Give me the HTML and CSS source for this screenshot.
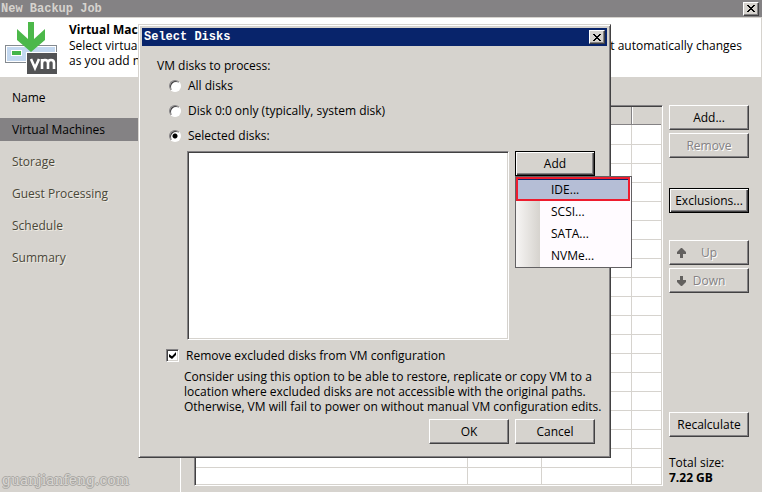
FILE: index.html
```html
<!DOCTYPE html>
<html lang="en">
<head>
<meta charset="utf-8">
<title>New Backup Job</title>
<link rel="stylesheet" href="styles.css">
</head>
<body>
<header class="titlebar main-title">
  <h1>New Backup Job</h1>
  <button class="close" type="button" aria-label="Close wizard"><svg viewBox="0 0 8 7"><path d="M0 0h2v1h1v1h2V1h1V0h2v1H7v1H6v1H5v1h1v1h1v1h1v1H6V6H5V5H3v1H2v1H0V6h1V5h1V4h1V3H2V2H1V1H0z"/></svg></button>
</header>
<section class="banner">
  <svg class="logo" viewBox="0 0 52 52">
    <rect x="0" y="23" width="52" height="18" fill="#848a90"/>
    <rect x="1" y="24" width="50" height="16" fill="#fff"/>
    <rect x="2" y="25" width="48" height="14" fill="#c3d8f0"/>
    <rect x="6" y="28" width="11" height="6" fill="#fff"/>
    <rect x="7" y="29" width="9" height="4" fill="#44b549"/>
    <path d="M23 0h6v17l11-10v11L26 30 12 18V7l11 10z" fill="#4cb84a"/>
    <rect x="21" y="30" width="31" height="22" fill="#fff"/>
    <rect x="22" y="31" width="30" height="21" fill="#525355"/>
    <path d="M26 37l4 9 4-9M37 47V37M37 41c0-4 6-4 6 0v6M43 41c0-4 6-4 6 0v6" fill="none" stroke="#fff" stroke-width="2.6"/>
  </svg>
  <div class="banner-text">
    <h2>Virtual Machi</h2>
    <p><span>Select virtual</span><span>at automatically changes</span></p>
    <p>as you add ne</p>
  </div>
</section>
<main class="wizard">
  <nav class="steps">
    <a href="#name">Name</a>
    <a href="#vms" class="current" aria-current="step">Virtual Machines</a>
    <a href="#storage" class="later">Storage</a>
    <a href="#guest" class="later">Guest Processing</a>
    <a href="#schedule" class="later">Schedule</a>
    <a href="#summary" class="later">Summary</a>
    <span class="watermark">guanjianfeng.com</span>
  </nav>
  <div class="content">
    <div class="grid sunken">
      <table aria-label="Virtual machines">
        <colgroup><col><col class="c2"><col class="c3"><col class="c4"></colgroup>
        <thead><tr><th></th><th></th><th></th><th></th></tr></thead>
        <tbody>
          <tr class="first"><td></td><td></td><td></td><td></td></tr>
          <tr><td></td><td></td><td></td><td></td></tr>
          <tr><td></td><td></td><td></td><td></td></tr>
          <tr><td></td><td></td><td></td><td></td></tr>
          <tr><td></td><td></td><td></td><td></td></tr>
          <tr><td></td><td></td><td></td><td></td></tr>
          <tr><td></td><td></td><td></td><td></td></tr>
          <tr><td></td><td></td><td></td><td></td></tr>
          <tr><td></td><td></td><td></td><td></td></tr>
          <tr><td></td><td></td><td></td><td></td></tr>
          <tr><td></td><td></td><td></td><td></td></tr>
          <tr><td></td><td></td><td></td><td></td></tr>
          <tr><td></td><td></td><td></td><td></td></tr>
          <tr><td></td><td></td><td></td><td></td></tr>
          <tr><td></td><td></td><td></td><td></td></tr>
          <tr><td></td><td></td><td></td><td></td></tr>
          <tr><td></td><td></td><td></td><td></td></tr>
          <tr><td></td><td></td><td></td><td></td></tr>
          <tr class="last"><td></td><td></td><td></td><td></td></tr>
        </tbody>
      </table>
    </div>
    <aside class="actions">
      <div class="group">
        <button class="btn" type="button">Add...</button>
        <button class="btn" type="button" disabled>Remove</button>
      </div>
      <button class="btn focused exclusions" type="button">Exclusions...</button>
      <div class="group">
        <button class="btn move" type="button" disabled><svg viewBox="0 0 9 10"><path d="M4 0h1l4 4v2H6v4H3V6H0V4z"/></svg><span>Up</span></button>
        <button class="btn move" type="button" disabled><svg viewBox="0 0 9 10"><path d="M3 0h3v4h3v2l-4 4H4L0 6V4h3z"/></svg><span>Down</span></button>
      </div>
      <button class="btn recalc" type="button">Recalculate</button>
      <p class="total">Total size:<br><strong>7.22 GB</strong></p>
    </aside>
  </div>
</main>

<div class="dialog" role="dialog" aria-labelledby="dialog-title">
  <header class="titlebar dialog-bar">
    <h2 id="dialog-title">Select Disks</h2>
    <button class="close" type="button" aria-label="Close dialog"><svg viewBox="0 0 8 7"><path d="M0 0h2v1h1v1h2V1h1V0h2v1H7v1H6v1H5v1h1v1h1v1h1v1H6V6H5V5H3v1H2v1H0V6h1V5h1V4h1V3H2V2H1V1H0z"/></svg></button>
  </header>
  <form class="dialog-body">
    <fieldset>
      <legend>VM disks to process:</legend>
      <label class="radio"><input type="radio" name="disks">All disks</label>
      <label class="radio"><input type="radio" name="disks">Disk 0:0 only (typically, system disk)</label>
      <label class="radio"><input type="radio" name="disks" checked>Selected disks:</label>
    </fieldset>
    <div class="picker">
      <select class="sunken" size="8" aria-label="Selected disks"></select>
      <div class="add">
        <button class="btn focused" type="button" aria-haspopup="menu">Add</button>
        <div class="menu" role="menu">
          <button class="active" type="button" role="menuitem">IDE...</button>
          <button type="button" role="menuitem">SCSI...</button>
          <button type="button" role="menuitem">SATA...</button>
          <button type="button" role="menuitem">NVMe...</button>
        </div>
      </div>
    </div>
    <label class="check"><input type="checkbox" checked>Remove excluded disks from VM configuration</label>
    <p class="hint">Consider using this option to be able to restore, replicate or copy VM to a<br>location where excluded disks are not accessible with the original paths.<br>Otherwise, VM will fail to power on without manual VM configuration edits.</p>
    <div class="buttons">
      <button class="btn" type="button">OK</button>
      <button class="btn" type="button">Cancel</button>
    </div>
  </form>
</div>
</body>
</html>
```
FILE: styles.css
```css
:root {
  --face: #d6d3ce;
  --shade: #848284;
  --dark: #424142;
}
* { box-sizing: border-box; }
body {
  margin: 0;
  min-height: 100vh;
  display: flex;
  flex-direction: column;
  position: relative;
  background: var(--face);
  color: #000;
  font: 12px/15px "Open Sans", "Noto Sans", sans-serif;
}
h1, h2, p { margin: 0; }
button, select { font: inherit; color: inherit; }

.titlebar {
  display: flex;
  align-items: center;
  justify-content: space-between;
}
.titlebar h1, .titlebar h2 {
  font: bold 12px/16px "Liberation Mono", monospace;
}
.main-title {
  height: 17px;
  padding: 0 3px 0 1px;
  background: var(--shade);
}
.main-title h1 { color: var(--face); }
.dialog-bar {
  height: 18px;
  padding: 0 2px;
  background: #08246b;
}
.dialog-bar h2 { color: #fff; }
.close {
  width: 16px;
  height: 14px;
  padding: 0;
  display: flex;
  align-items: center;
  justify-content: center;
  background: var(--face);
  border: 1px solid;
  border-color: #fff var(--dark) var(--dark) #fff;
  box-shadow: inset -1px -1px var(--shade);
}
.close svg { width: 8px; height: 7px; shape-rendering: crispEdges; }

.banner {
  display: flex;
  height: 59px;
  margin: 1px 1px 0 0;
  padding: 4px 19px 0 5px;
  background: #fff;
}
.logo { width: 52px; height: 52px; flex: none; }
.banner-text { flex: 1; margin-left: 12px; }
.banner-text h2 { font-size: 12px; line-height: 15px; }
.banner-text p { display: flex; justify-content: space-between; }
.banner-text h2 + p { margin-top: 1px; }

.wizard { flex: 1; display: flex; }
.steps {
  width: 181px;
  padding-top: 9px;
  display: flex;
  flex-direction: column;
  gap: 9px;
  border-right: 1px solid #fff;
}
.steps a {
  padding: 0 12px;
  line-height: 23px;
  color: #000;
  text-decoration: none;
}
.steps .current { background: var(--shade); }
.steps .later { color: #4a4739; text-shadow: 1px 1px #eeebe2; }
.watermark {
  margin: auto 0 3px 2px;
  font: 14px/18px "DejaVu Serif", serif;
  color: #d8d6d2;
  text-shadow: 1px 0 #aaa8a4, -1px 0 #aaa8a4, 0 1px #aaa8a4, 0 -1px #aaa8a4;
}

.content {
  flex: 1;
  display: flex;
  gap: 6px;
  padding: 28px 13px 6px;
}
.sunken {
  background: #fff;
  border: 1px solid;
  border-color: var(--shade) #fff #fff var(--shade);
  box-shadow: inset 1px 1px var(--dark), inset -1px -1px var(--face);
}
.grid { flex: 1; padding: 1px; }
.grid table {
  width: 100%;
  table-layout: fixed;
  border-collapse: separate;
  border-spacing: 0;
}
.c2 { width: 74px; }
.c3 { width: 90px; }
.c4 { width: 29px; }
.grid th, .grid td { padding: 0; }
.grid th {
  height: 18px;
  background: var(--face);
  border: solid var(--shade);
  border-width: 0 1px 1px 0;
  box-shadow: inset 1px 0 #fff;
}
.grid td {
  height: 19px;
  border: solid var(--face);
  border-width: 0 1px 1px 0;
}
.grid th:last-child, .grid td:last-child { border-right: 0; }
.grid .first td { height: 20px; }
.grid .last td { height: 16px; border-bottom: 0; }

.actions { width: 80px; display: flex; flex-direction: column; }
.group { display: grid; gap: 3px; }
.btn {
  width: 80px;
  height: 25px;
  padding: 0;
  background: var(--face);
  border: 1px solid;
  border-color: #fff var(--dark) var(--dark) #fff;
  box-shadow: inset -1px -1px var(--shade);
}
.btn:disabled { color: var(--shade); text-shadow: 1px 1px #fff; }
.focused {
  border-color: #000;
  box-shadow: inset 1px 1px #fff, inset -1px -1px var(--dark), inset -2px -2px var(--shade);
}
.exclusions { margin: 30px 0 27px; }
.move { display: flex; align-items: center; padding: 0 16px 0 7px; }
.move svg { width: 9px; height: 10px; flex: none; fill: #63615f; }
.move span { flex: 1; }
.recalc { margin-top: auto; }
.total { margin: 18px 0 1px; }

.dialog {
  position: absolute;
  left: 138px;
  top: 24px;
  width: 473px;
  padding: 3px;
  background: var(--face);
  border: 1px solid;
  border-color: var(--face) var(--dark) var(--dark) var(--face);
  box-shadow: inset 1px 1px #fff, inset -1px -1px var(--shade);
}
.dialog-body { padding: 12px 12px 10px 15px; }
fieldset { margin: 0; padding: 0; border: 0; }
legend { padding: 0; height: 15px; }
.radio { display: flex; align-items: center; gap: 7px; height: 25px; padding-left: 12px; }
input { appearance: none; margin: 0; background: #fff; }
.radio input {
  width: 12px;
  height: 12px;
  border: 1px solid;
  border-color: var(--shade) #fff #fff var(--shade);
  border-radius: 50%;
  box-shadow: inset 1px 1px var(--dark);
}
.radio input:checked { background: radial-gradient(circle, #000 2px, #fff 3px); }
.picker { display: flex; gap: 6px; margin: 3px 0 8px 30px; }
.picker select { width: 322px; height: 189px; padding: 0; border-radius: 0; }
.add { position: relative; }
.menu {
  position: absolute;
  left: 0;
  top: 25px;
  width: 117px;
  padding: 0 1px 0 0;
  display: grid;
  border: 1px solid #636163;
  background: linear-gradient(90deg, #f7f5f4, #d6d3ce) 0 0 / 24px 100% no-repeat, #fffbff;
}
.menu button {
  height: 22px;
  padding: 0 0 2px 35px;
  border: 0;
  background: none;
  text-align: left;
}
.menu .active {
  height: 24px;
  padding: 0 0 0 33px;
  background: #b5bed6;
  border: 2px solid #ee1c2e;
  box-shadow: inset 0 1px #08246b;
}
.check { display: flex; align-items: center; gap: 7px; height: 15px; padding-left: 9px; }
.check input {
  width: 13px;
  height: 13px;
  border: 1px solid;
  border-color: var(--shade) #fff #fff var(--shade);
  box-shadow: inset 1px 1px var(--dark), inset -1px -1px var(--face);
  display: grid;
  place-items: center;
}
.check input:checked::after {
  content: "";
  width: 7px;
  height: 7px;
  background: #000;
  clip-path: polygon(0 29%, 43% 60%, 100% 0, 100% 43%, 43% 100%, 0 71%);
}
.hint { margin: 6px 0 5px 27px; white-space: nowrap; }
.buttons { display: flex; justify-content: flex-end; gap: 6px; }
```
